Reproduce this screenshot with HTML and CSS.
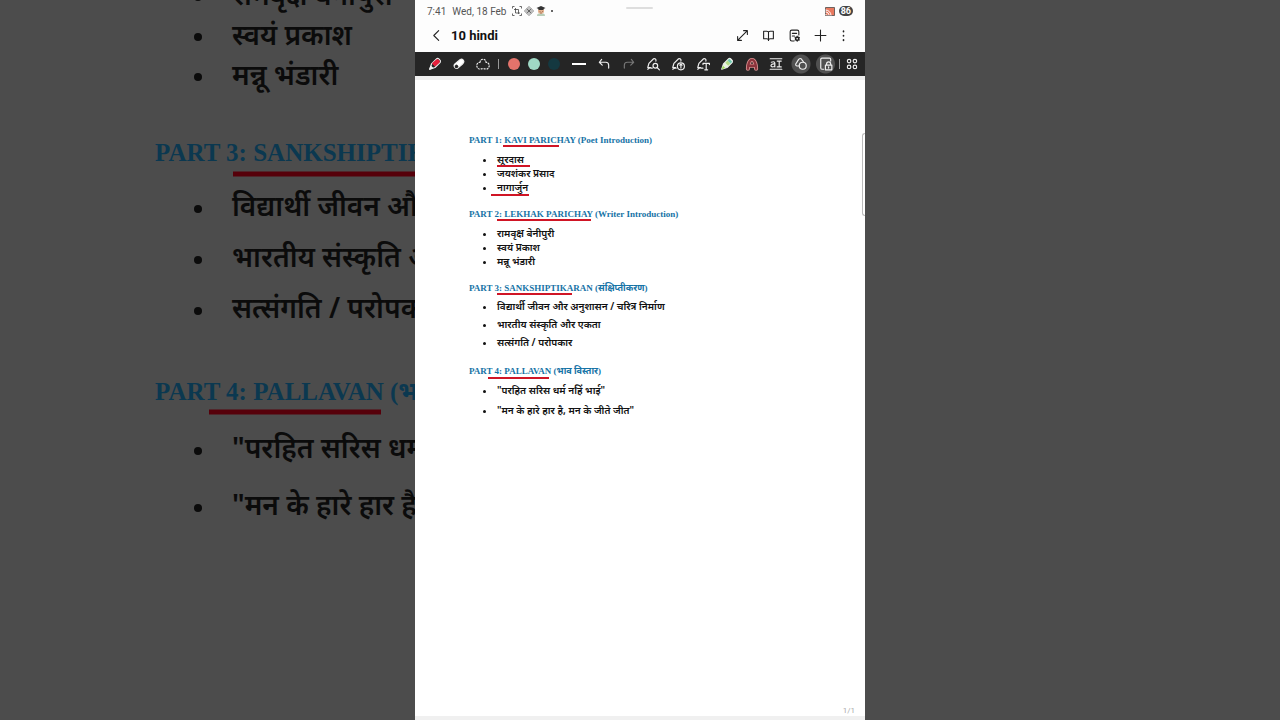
FILE: index.html
```html
<!DOCTYPE html>
<html lang="hi">

<head>
    <meta charset="UTF-8">
    <meta name="viewport" content="width=device-width, initial-scale=1.0">
    <title>10 hindi</title>
    <link rel="stylesheet" href="styles.css">
</head>

<body>
    <div class="backdrop" aria-hidden="true">
        <div class="notes notes-large">
            <section>
                <ul class="tight">
                    <li>रामवृक्ष बेनीपुरी</li>
                    <li>स्वयं प्रकाश</li>
                    <li>मन्नू भंडारी</li>
                </ul>
            </section>
            <section>
                <h2>PART 3: SANKSHIPTIKARAN</h2>
                <ul>
                    <li>विद्यार्थी जीवन और अनुशासन</li>
                    <li>भारतीय संस्कृति और एकता</li>
                    <li>सत्संगति / परोपकार</li>
                </ul>
            </section>
            <section>
                <h2>PART 4: PALLAVAN (भाव विस्तार)</h2>
                <ul class="loose">
                    <li>"परहित सरिस धर्म नहिं भाई"</li>
                    <li>"मन के हारे हार है, मन के जीते जीत"</li>
                </ul>
            </section>
        </div>
        <svg class="ink">
            <path d="M233 174H430M209 412H381" />
        </svg>
    </div>

    <main class="screen">
        <div class="status">
            <span class="time">7:41</span>
            <span class="date">Wed, 18 Feb</span>
            <svg width="10" height="10" viewBox="0 0 20 20" fill="none" stroke="#444" stroke-width="1.6">
                <path d="M1 5V1h4M15 1h4v4M19 15v4h-4M5 19H1v-4M7 4v10h9M4 7h9v9" />
            </svg>
            <svg width="10" height="10" viewBox="0 0 20 20" fill="none" stroke="#555" stroke-width="1.5">
                <path d="M10 1l9 9-9 9-9-9zM10 5l5 5-5 5-5-5zM5.500 5.500l9 9M14.500 5.500l-9 9M10 8l2 2-2 2-2-2z" />
            </svg>
            <svg width="10" height="10" viewBox="0 0 20 20">
                <circle cx="10" cy="10" r="6" fill="#e3b08c" />
                <path d="M2 20c0-6 4-6 8-4 4-2 8-2 8 4z" fill="#b9cdb8" />
                <path d="M1 4l9-4 9 4-4 2v2H5V6z" fill="#333" />
                <path d="M7 11h2M12 11h2M8 14h4" stroke="#743" />
            </svg>
            <span class="dot"></span>
            <span class="pull"></span>
            <svg class="cast" width="10" height="9" viewBox="0 0 20 18">
                <path d="M1 1h18v16H1z" fill="#e9795f" stroke="#444" stroke-width="1.500" />
                <path d="M1 6c6 0 11 5 11 11M1 10c4 0 7 3 7 7M1 14l3 3" fill="none" stroke="#fff" stroke-width="2" />
            </svg>
            <span class="battery">86</span>
        </div>

        <header>
            <button class="back" aria-label="Back">
                <svg width="13" height="13" viewBox="0 0 24 24"><path d="M16 3l-9 9 9 9" /></svg>
            </button>
            <h1>10 hindi</h1>
            <button aria-label="Full screen">
                <svg width="13" height="13" viewBox="0 0 24 24"><path d="M3 21L21 3M14 3h7v7M3 14v7h7" /></svg>
            </button>
            <button aria-label="Reading mode">
                <svg width="13" height="13" viewBox="0 0 24 24"><path d="M12 5v16M3 4h6c2 0 3 0 3 2 0-2 1-2 3-2h6v14h-6c-2 0-3 1-3 3 0-2-1-3-3-3H3z" /></svg>
            </button>
            <button aria-label="Page settings">
                <svg width="13" height="13" viewBox="0 0 24 24">
                    <path d="M20 11V5c0-2-1-3-3-3H7C5 2 4 3 4 5v14c0 2 1 3 3 3h4M8 8h8M8 13h4" />
                    <circle cx="17" cy="18" r="3" stroke-width="3" />
                    <path d="M17 13v10M12.500 15.500l9 5M12.500 20.500l9-5" stroke-width="1.500" />
                    <circle cx="17" cy="18" r="1.500" fill="#fff" stroke="none" />
                </svg>
            </button>
            <button aria-label="Add page">
                <svg width="13" height="13" viewBox="0 0 24 24"><path d="M12 2v20M2 12h20" /></svg>
            </button>
            <button class="more" aria-label="More options">
                <svg width="13" height="13" viewBox="0 0 24 24"><path d="M12 4v1M12 12v1M12 20v1" stroke-width="3" /></svg>
            </button>
        </header>

        <nav class="toolbar">
            <button class="pen" aria-label="Pen">
                <svg width="14" height="14" viewBox="0 0 24 24">
                    <path d="M3 21l3-9 9-9c2-2 8 3 6 6l-9 9z" />
                    <path d="M8 11l7-6c2-1 5 2 4 4l-7 6z" fill="#e8203c" stroke="#e8203c" />
                    <path d="M3 21l2-5 3 3z" fill="#fff" />
                </svg>
            </button>
            <button class="eraser" aria-label="Eraser">
                <svg width="14" height="14" viewBox="0 0 24 24">
                    <path d="M12 6c3-3 5-3 7-1s2 4-1 7l-7 6c-2 2-4 2-6 0s-2-4 0-6z" fill="#fff" />
                    <path d="M7 13c2 0 4 2 4 4l-2 2c-3 1-5-1-4-4z" fill="#252525" stroke="none" />
                </svg>
            </button>
            <button class="lasso" aria-label="Select">
                <svg width="14" height="14" viewBox="0 0 24 24"><path d="M7 9c0-7 10-7 10 0 6 1 7 6 4 10-2 3-6 1-9 1s-7 2-9-1C0 15 1 10 7 9z" stroke-dasharray="2 3" /></svg>
            </button>
            <span class="separator"></span>
            <button class="swatch" aria-label="Coral"><span class="coral"></span></button>
            <button class="swatch" aria-label="Mint"><span class="mint"></span></button>
            <button class="swatch" aria-label="Teal"><span class="teal"></span></button>
            <div class="tools">
                <button aria-label="Line thickness"><span class="thickness"></span></button>
                <button aria-label="Undo">
                    <svg width="14" height="14" viewBox="0 0 24 24"><path d="M8 4L4 9l5 5M4 9h11c4 0 5 2 5 5v5" /></svg>
                </button>
                <button class="faded" aria-label="Redo" disabled>
                    <svg width="14" height="14" viewBox="0 0 24 24"><path d="M16 4l4 5-5 5M20 9H9c-4 0-5 2-5 5v5" /></svg>
                </button>
                <button aria-label="Search handwriting">
                    <svg width="14" height="14" viewBox="0 0 24 24">
                        <path d="M8 18H3l2-7 8-8c2-1 5 1 4 4M3 21c4-4 6-1 8-2" />
                        <circle cx="16" cy="15" r="4" />
                        <path d="M19 18l4 4" />
                    </svg>
                </button>
                <button aria-label="Straighten handwriting">
                    <svg width="14" height="14" viewBox="0 0 24 24">
                        <path d="M8 18H3l2-7 8-8c2-1 5 1 4 4M3 21c3-3 5-1 6-2" />
                        <circle cx="17" cy="16" r="6" />
                        <path d="M17 19v-7M15 14l2-2 2 2" />
                    </svg>
                </button>
                <button aria-label="Handwriting to text">
                    <svg width="14" height="14" viewBox="0 0 24 24"><path d="M8 18H3l2-7 8-8c2-1 5 1 4 4M3 21c4-4 6-1 9-2M12 13v-2h11v2M17.500 11v11M15 22h5" /></svg>
                </button>
                <button aria-label="Colour highlighter">
                    <svg width="14" height="14" viewBox="0 0 24 24">
                        <path d="M3 21l3-9 9-9c2-2 8 3 6 6l-9 9z" fill="#e8f3df" />
                        <path d="M9 10l4-4 5 5-4 4z" fill="#b5dc8a" stroke="none" />
                        <path d="M13 6l3-3 5 5-3 3z" fill="#6fcbb0" stroke="none" />
                        <path d="M3 21l2-6 4 4z" fill="#9bdd55" stroke="none" />
                    </svg>
                </button>
                <button aria-label="Text style">
                    <svg width="14" height="14" viewBox="0 0 24 24">
                        <path d="M5 20c0-6 2-15 7-15s7 9 7 15M8 15h8" stroke="#d99090" stroke-width="7" />
                        <path d="M5 20c0-6 2-15 7-15s7 9 7 15M8 15h8" stroke="#8c343c" stroke-width="4" />
                    </svg>
                </button>
                <button aria-label="Line spacing">
                    <svg width="14" height="14" viewBox="0 0 24 24"><path d="M2 3h20M2 21h20M4 9c5-2 6 0 6 2v6M10 12c-8-1-8 5-4 5 2 0 4-2 4-3M14 7h7M14 17h7M17.500 7v10" /></svg>
                </button>
                <button class="active" aria-label="Shapes" aria-pressed="true">
                    <svg width="14" height="14" viewBox="0 0 24 24">
                        <path d="M9 15c-4 1-7 0-6-3l5-8c2-2 4-2 5 0l3 4" />
                        <circle cx="15" cy="15" r="6" />
                    </svg>
                </button>
                <button class="active" aria-label="Lock canvas" aria-pressed="true">
                    <svg width="14" height="14" viewBox="0 0 24 24">
                        <path d="M8 21H5c-2 0-2-1-2-2V4c0-1 1-2 2-2h13c1 0 2 1 2 2v3" />
                        <path d="M11 14h11v8H11zM13 14v-2c0-5 7-5 7 0v2M16.500 17v2" />
                    </svg>
                </button>
            </div>
            <span class="separator narrow"></span>
            <button class="apps" aria-label="All tools">
                <svg width="14" height="14" viewBox="0 0 24 24">
                    <circle cx="7" cy="7" r="3" />
                    <circle cx="17" cy="7" r="3" />
                    <circle cx="7" cy="17" r="3" />
                    <circle cx="17" cy="17" r="3" />
                </svg>
            </button>
        </nav>

        <article class="page">
            <div class="notes">
                <section>
                    <h2>PART 1: KAVI PARICHAY (Poet Introduction)</h2>
                    <ul class="tight">
                        <li>सूरदास</li>
                        <li>जयशंकर प्रसाद</li>
                        <li>नागार्जुन</li>
                    </ul>
                </section>
                <section>
                    <h2>PART 2: LEKHAK PARICHAY (Writer Introduction)</h2>
                    <ul class="tight">
                        <li>रामवृक्ष बेनीपुरी</li>
                        <li>स्वयं प्रकाश</li>
                        <li>मन्नू भंडारी</li>
                    </ul>
                </section>
                <section>
                    <h2>PART 3: SANKSHIPTIKARAN (संक्षिप्तीकरण)</h2>
                    <ul>
                        <li>विद्यार्थी जीवन और अनुशासन / चरित्र निर्माण</li>
                        <li>भारतीय संस्कृति और एकता</li>
                        <li>सत्संगति / परोपकार</li>
                    </ul>
                </section>
                <section>
                    <h2>PART 4: PALLAVAN (भाव विस्तार)</h2>
                    <ul class="loose">
                        <li>"परहित सरिस धर्म नहिं भाई"</li>
                        <li>"मन के हारे हार है, मन के जीते जीत"</li>
                    </ul>
                </section>
            </div>
            <!-- pen strokes, in page coordinates -->
            <svg class="ink">
                <path d="M88 66H144M82 86H115M76 115H114M82 140H176M82 214H157M73 298H134" />
            </svg>
            <span class="edge-handle"></span>
            <footer>1/1</footer>
        </article>
    </main>

    <div class="backdrop"></div>
</body>

</html>
```
FILE: styles.css
```css
* {
    box-sizing: border-box;
}

html,
body {
    margin: 0;
    padding: 0;
    height: 100%;
}

body {
    display: flex;
    overflow: hidden;
    background: #4c4c4c;
    color: #111;
    font-family: Roboto, "Liberation Sans", sans-serif;
}

h1,
h2,
ul {
    margin: 0;
    padding: 0;
}

button {
    display: flex;
    align-items: center;
    justify-content: center;
    width: 26px;
    height: 24px;
    padding: 0;
    border: 0;
    background: none;
    color: inherit;
}

button svg {
    flex: none;
    fill: none;
    stroke: currentColor;
    stroke-width: 2;
    stroke-linecap: round;
    stroke-linejoin: round;
}

.backdrop {
    position: relative;
    flex: 1;
    min-width: 0;
    overflow: hidden;
    background: #4c4c4c;
}

.screen {
    display: flex;
    flex: none;
    flex-direction: column;
    min-width: 0;
    height: 100vh;
    aspect-ratio: 5 / 8;
    background: #fdfdfd;
}

/* status bar */

.status {
    position: relative;
    display: flex;
    align-items: center;
    gap: 2px;
    height: 22px;
    padding: 0 12px;
    color: #555;
    font-size: 10px;
}

.date {
    margin: 0 4px;
}

.dot {
    width: 2px;
    height: 2px;
    margin-left: 3px;
    border-radius: 50%;
    background: #333;
}

.pull {
    position: absolute;
    top: 7px;
    left: 50%;
    width: 27px;
    height: 2px;
    margin-left: -14px;
    border-radius: 1px;
    background: #dedede;
}

.cast {
    margin-left: auto;
}

.battery {
    margin-left: 2px;
    padding: 0 2px;
    border-radius: 5px;
    background: #444;
    color: #fff;
    font-size: 9px;
    font-weight: 700;
    line-height: 10px;
}

/* title bar */

header {
    display: flex;
    align-items: center;
    height: 30px;
    padding: 0 12px 4px 8px;
    color: #222;
}

header h1 {
    flex: 1;
    margin-left: 2px;
    color: #111;
    font-size: 13px;
    font-weight: 700;
}

.more {
    width: 20px;
}

/* drawing tools */

.toolbar {
    display: flex;
    align-items: center;
    height: 24px;
    padding: 0 2px 0 8px;
    background: #252525;
    color: #eee;
}

.toolbar .pen,
.toolbar .eraser,
.toolbar .lasso {
    width: 24px;
}

.separator {
    width: 1px;
    height: 10px;
    margin: 0 5px 0 3px;
    background: #999;
}

.narrow {
    margin: 0 1px;
}

.toolbar .swatch {
    width: 20px;
}

.swatch span {
    width: 12px;
    height: 12px;
    border-radius: 50%;
}

.coral {
    background: #e4736b;
}

.mint {
    background: #9fd8c5;
}

.teal {
    background: #143840;
}

.tools {
    display: flex;
    flex: 1;
    min-width: 0;
    margin-left: 3px;
}

.tools button {
    flex: 1;
    min-width: 0;
}

.thickness {
    width: 14px;
    height: 2px;
    background: #fff;
}

.faded {
    color: #777;
}

.active {
    background: radial-gradient(circle, #505050 9px, transparent 10px);
}

.toolbar .apps {
    width: 22px;
}

/* page */

.page {
    position: relative;
    display: flex;
    flex: 1;
    flex-direction: column;
    border-top: 4px solid #eee;
    border-bottom: 4px solid #f0f0f0;
    background: #fff;
}

.notes {
    display: flex;
    flex: 1;
    flex-direction: column;
    gap: 11px;
    padding: 51px 54px 0;
}

.notes h2 {
    color: #1673a6;
    font-family: "Liberation Serif", "Noto Sans", serif;
    font-size: 9px;
    font-weight: 700;
    line-height: 18px;
    white-space: nowrap;
}

.notes ul {
    list-style: none;
    font-family: "Noto Sans", "Noto Sans Devanagari", sans-serif;
    font-size: 10px;
    font-weight: 600;
    line-height: 18px;
    white-space: nowrap;
}

.notes .tight {
    margin-top: 3px;
    line-height: 14px;
}

.notes .loose {
    line-height: 20px;
}

.notes li {
    display: flex;
    align-items: center;
}

.notes li::before {
    content: "";
    flex: none;
    width: 3px;
    height: 3px;
    margin: 2px 11px 0 14px;
    border-radius: 50%;
    background: currentColor;
}

.ink {
    position: absolute;
    top: 0;
    left: 0;
    width: 100%;
    height: 100%;
    stroke: #d01525;
    stroke-width: 2;
}

.edge-handle {
    position: absolute;
    top: 53px;
    right: 0;
    width: 3px;
    height: 83px;
    border: 1px solid #bbb;
    border-right: 0;
    border-radius: 3px 0 0 3px;
}

footer {
    padding: 0 10px;
    color: #aaa;
    font-size: 8px;
    line-height: 10px;
    text-align: right;
}

/* enlarged copy behind the screen */

.notes-large {
    gap: 33px;
    margin-top: -26px;
    padding: 0 0 0 155px;
    color: #0b0b0b;
}

.notes-large h2 {
    color: #0b3850;
    font-size: 25px;
    line-height: 51px;
}

.notes-large ul {
    margin-top: 2px;
    font-size: 28px;
    line-height: 51px;
}

.notes-large .tight {
    margin-top: 0;
    line-height: 40px;
}

.notes-large .loose {
    line-height: 57px;
}

.notes-large li::before {
    width: 8px;
    height: 8px;
    margin: 6px 30px 0 39px;
}

.backdrop .ink {
    stroke: #56000a;
    stroke-width: 5;
}
```
